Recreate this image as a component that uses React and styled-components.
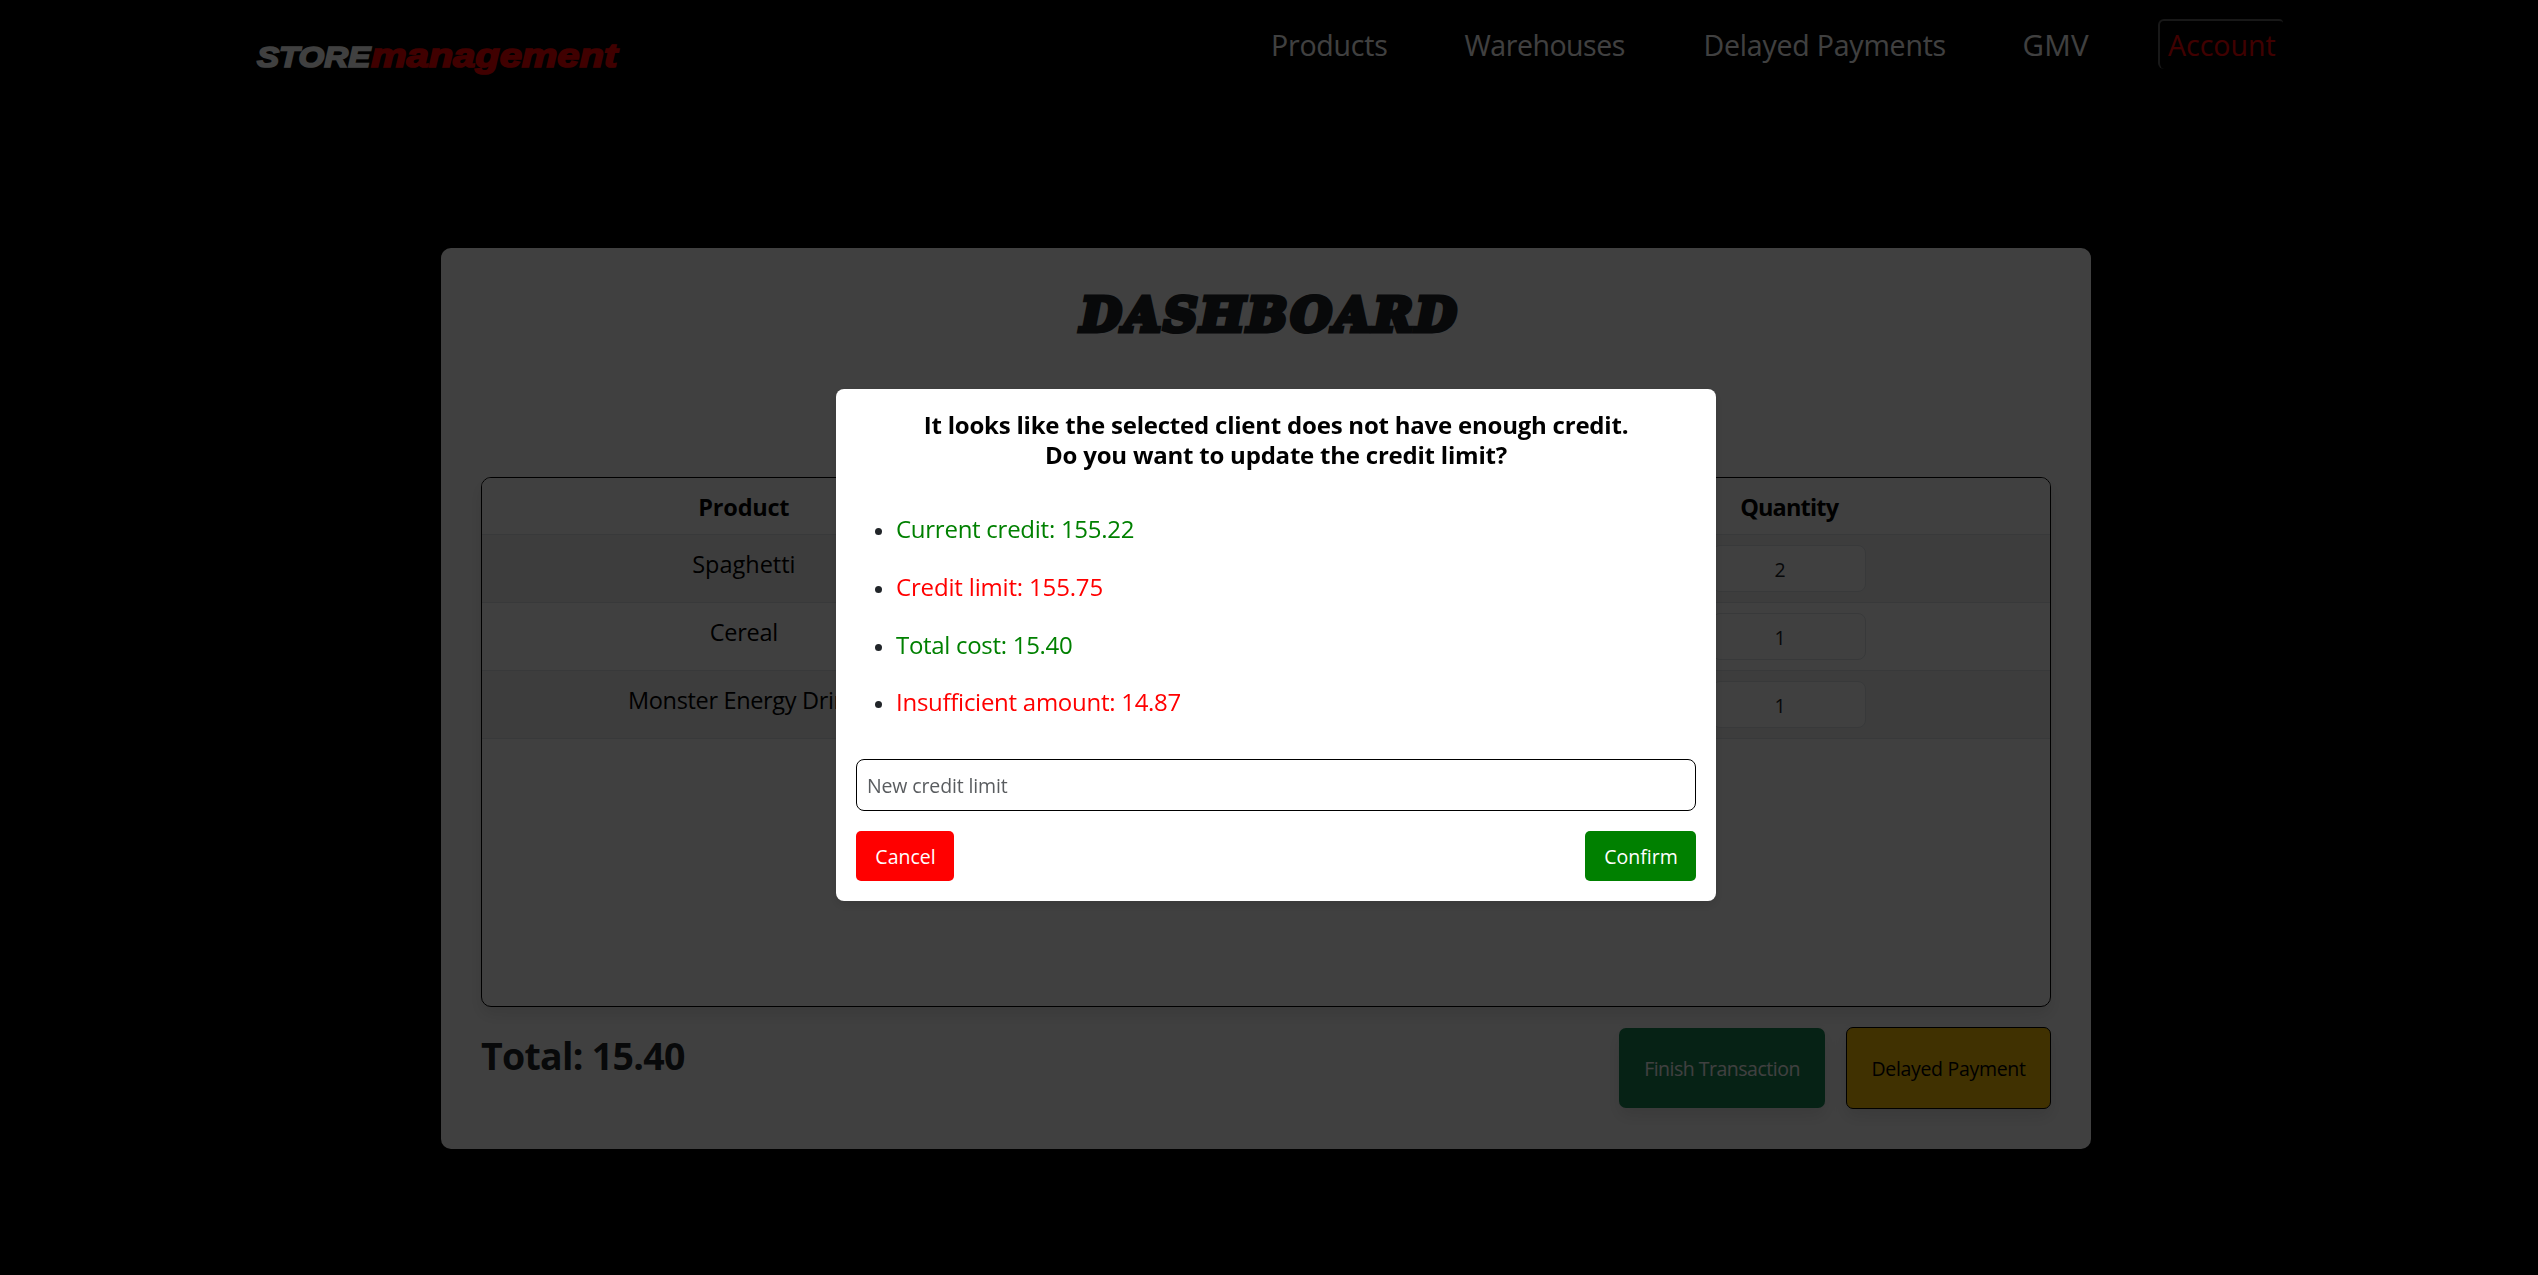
import React from "react";
import styled, { createGlobalStyle } from "styled-components";

const GlobalStyle = createGlobalStyle`
  *, *::before, *::after { box-sizing: border-box; }
  html, body { margin: 0; background: #000; }
  body {
    font-family: "Open Sans", "Noto Sans", sans-serif;
    font-size: 19.5px;
    color: #212529;
    overflow: hidden;
  }
  button, input { font: inherit; margin: 0; }
`;

const Page = styled.div`
  min-height: 1275px;
  background: #000;
`;

const Header = styled.header`
  display: flex;
  justify-content: space-between;
  align-items: flex-start;
  height: 248px;
  padding: 19px 255px 0 257px;
`;

const Logo = styled.a`
  display: flex;
  align-items: baseline;
  margin-top: 10px;
  font-family: "Liberation Sans", Arial, sans-serif;
  font-weight: 700;
  font-style: italic;
  line-height: 52px;
`;

const LogoWord = styled.span`
  width: ${(p) => p.$width}px;
  font-size: ${(p) => p.$size}px;
  color: ${(p) => p.$color};
  white-space: nowrap;
  -webkit-text-stroke: 1.7px ${(p) => p.$color};
  transform: scaleX(${(p) => p.$stretch});
  transform-origin: left;
`;

const Nav = styled.nav`
  display: flex;
`;

const NavItem = styled.a`
  width: ${(p) => p.$width}px;
  border-top: 2px solid transparent;
  font-size: ${(p) => p.$size || 28.5}px;
  line-height: 48px;
  letter-spacing: ${(p) => p.$tracking}px;
  white-space: nowrap;
  color: #fff;
`;

const AccountItem = styled(NavItem)`
  border-top-color: #606060;
  border-left: 2px solid #606060;
  border-radius: 6px 4px 0 6px;
  padding-left: 8px;
  color: #f00;
`;

const Card = styled.main`
  width: 1650px;
  height: 901px;
  margin-left: 441px;
  padding: 40px;
  background: #fff;
  border-radius: 10px;
`;

const Title = styled.h1`
  margin: 0 0 135px;
  padding-left: 8px;
  text-align: center;
  font-family: "DejaVu Serif", serif;
  font-size: 47px;
  font-weight: 700;
  font-style: italic;
  line-height: 54px;
  letter-spacing: 2.8px;
  -webkit-text-stroke: 5px #212529;
`;

const Table = styled.section`
  height: 530px;
  border: 1px solid #000;
  border-radius: 10px;
  box-shadow: 0 8px 16px rgba(0, 0, 0, 0.1);
  overflow: hidden;
  color: #000;
  font-size: 23.5px;
`;

const Row = styled.div`
  display: grid;
  grid-template-columns: repeat(3, 1fr);
  height: 68px;
  padding-top: 8px;
  border-bottom: 1px solid #dee2e6;
  background: ${(p) => (p.$striped ? "#f2f2f2" : "#fff")};
  text-align: center;
  line-height: 43px;
`;

const HeadRow = styled(Row)`
  height: 57px;
  font-weight: 700;
`;

const Cell = styled.div`
  padding-left: 1px;
  letter-spacing: ${(p) => p.$tracking || 0}px;
  white-space: nowrap;
`;

const QuantityInput = styled.input`
  display: block;
  width: 154px;
  height: 47px;
  margin: 2px auto 0;
  padding: 1px 18px 0 0;
  border: 1px solid #dee2e6;
  border-radius: 8px;
  background: #fff;
  color: #212529;
  text-align: center;
  font-size: 19.5px;
`;

const Footer = styled.footer`
  display: flex;
  justify-content: space-between;
  align-items: flex-start;
  margin-top: 20px;
`;

const Total = styled.h2`
  margin: 0;
  font-size: 37.5px;
  font-weight: 700;
  line-height: 57px;
  letter-spacing: -0.7px;
`;

const Actions = styled.div`
  display: flex;
  align-items: center;
  gap: 21px;
`;

const ActionButton = styled.button`
  width: ${(p) => p.$width}px;
  height: ${(p) => p.$height}px;
  padding: 0;
  border: ${(p) => p.$border || "0"};
  border-radius: 7px;
  background: ${(p) => p.$bg};
  color: ${(p) => p.$color};
  letter-spacing: ${(p) => p.$tracking}px;
  box-shadow: 0 8px 16px rgba(0, 0, 0, 0.1);
`;

const Overlay = styled.div`
  position: fixed;
  inset: 0;
  display: flex;
  justify-content: center;
  align-items: center;
  padding: 15px 0 0 14px;
  background: rgba(0, 0, 0, 0.75);
`;

const Modal = styled.div`
  display: flex;
  flex-direction: column;
  width: 880px;
  height: 512px;
  padding: 21px 20px 20px;
  border-radius: 8px;
  background: #fff;
  box-shadow: 0 4px 12px rgba(0, 0, 0, 0.12);
`;

const ModalTitle = styled.h3`
  margin: 0 0 30px;
  text-align: center;
  font-size: 24px;
  font-weight: 700;
  line-height: 30px;
  letter-spacing: -0.22px;
  color: #000;
`;

const CreditList = styled.ul`
  margin: 0;
  padding: 0 0 0 19px;
  list-style: none;
  height: 259px;
`;

const CreditItem = styled.li`
  display: flex;
  align-items: center;
  gap: 14px;
  height: 57.7px;
  font-size: 24px;
  letter-spacing: ${(p) => p.$tracking}px;
  color: ${(p) => p.$color};

  &::before {
    content: "";
    width: 7px;
    height: 7px;
    margin-top: 6px;
    border-radius: 50%;
    background: #212529;
  }
`;

const LimitInput = styled.input`
  height: 52px;
  padding: 1px 10px 0;
  border: 1px solid #000;
  border-radius: 8px;
  background: #fff;

  &::placeholder {
    color: rgba(33, 37, 41, 0.75);
    letter-spacing: -0.13px;
  }
`;

const ModalActions = styled.div`
  display: flex;
  justify-content: space-between;
  margin-top: 20px;
`;

const ModalButton = styled.button`
  width: ${(p) => p.$width}px;
  height: 50px;
  padding: 1px 0 0 1px;
  border: 0;
  border-radius: 5px;
  background: ${(p) => p.$bg};
  color: #fff;
`;

const navItems = [
  { label: "Products", width: 193.5, tracking: -0.2 },
  { label: "Warehouses", width: 239, tracking: -0.47 },
  { label: "Delayed Payments", width: 319, tracking: -0.2 },
  { label: "GMV", width: 135.5, tracking: 0.3, size: 29.5 },
];

const products = [
  { name: "Spaghetti", quantity: 2, tracking: 0 },
  { name: "Cereal", quantity: 1, tracking: -0.28 },
  { name: "Monster Energy Drink", quantity: 1, tracking: -0.34 },
];

const credit = [
  { text: "Current credit: 155.22", color: "green", tracking: -0.26 },
  { text: "Credit limit: 155.75", color: "red", tracking: -0.17 },
  { text: "Total cost: 15.40", color: "green", tracking: -0.3 },
  { text: "Insufficient amount: 14.87", color: "red", tracking: -0.27 },
];

export default function App() {
  return (
    <Page>
      <GlobalStyle />
      <Header>
        <Logo>
          <LogoWord $width={114} $size={29.5} $color="#fff" $stretch={1.12}>STORE</LogoWord>
          <LogoWord $width={249} $size={33.7} $color="#f00" $stretch={1.185}>management</LogoWord>
        </Logo>
        <Nav>
          {navItems.map((item) => (
            <NavItem key={item.label} $width={item.width} $size={item.size} $tracking={item.tracking}>
              {item.label}
            </NavItem>
          ))}
          <AccountItem $width={125} $tracking={0}>Account</AccountItem>
        </Nav>
      </Header>

      <Card>
        <Title>DASHBOARD</Title>
        <Table>
          <HeadRow>
            <Cell $tracking={-0.23}>Product</Cell>
            <Cell />
            <Cell $tracking={-0.84}>Quantity</Cell>
          </HeadRow>
          {products.map((product, i) => (
            <Row key={product.name} $striped={i % 2 === 0}>
              <Cell $tracking={product.tracking}>{product.name}</Cell>
              <Cell />
              <Cell>
                <QuantityInput defaultValue={product.quantity} />
              </Cell>
            </Row>
          ))}
        </Table>
        <Footer>
          <Total>Total: 15.40</Total>
          <Actions>
            <ActionButton $width={206} $height={80} $bg="#198754" $color="#fff" $tracking={-0.5}>
              Finish Transaction
            </ActionButton>
            <ActionButton $width={205} $height={82} $bg="#ffc107" $color="#000" $border="1px solid #000" $tracking={-0.31}>
              Delayed Payment
            </ActionButton>
          </Actions>
        </Footer>
      </Card>

      <Overlay>
        <Modal>
          <ModalTitle>
            It looks like the selected client does not have enough credit.
            <br />
            Do you want to update the credit limit?
          </ModalTitle>
          <CreditList>
            {credit.map((item) => (
              <CreditItem key={item.text} $color={item.color} $tracking={item.tracking}>
                {item.text}
              </CreditItem>
            ))}
          </CreditList>
          <LimitInput placeholder="New credit limit" />
          <ModalActions>
            <ModalButton $width={98} $bg="#f00">Cancel</ModalButton>
            <ModalButton $width={111} $bg="green">Confirm</ModalButton>
          </ModalActions>
        </Modal>
      </Overlay>
    </Page>
  );
}
